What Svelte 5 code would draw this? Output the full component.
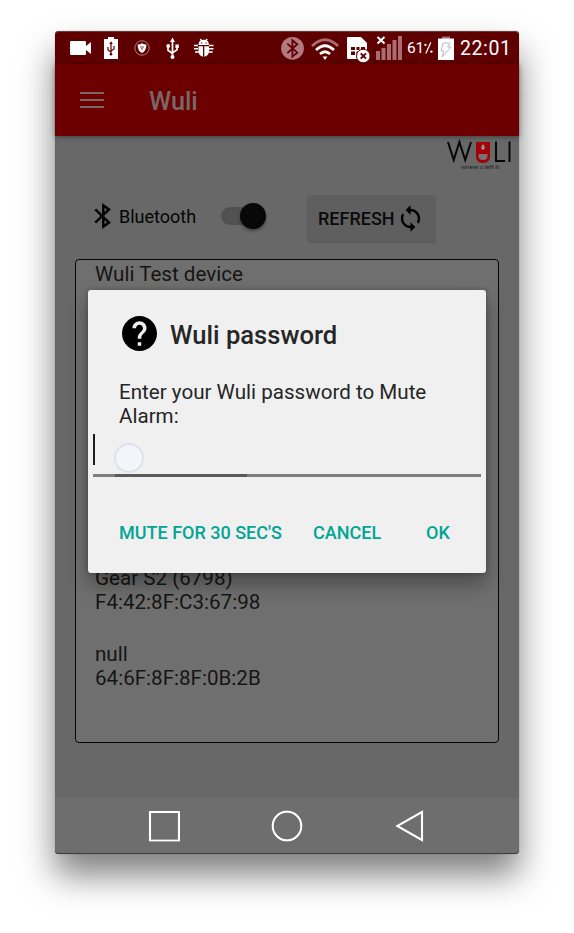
<script>
  const devices = [
    { name: 'Wuli Test device', address: '' },
    { name: '', address: '' },
    { name: '', address: '' },
    { name: '', address: '' },
    { name: 'Gear S2 (6798)', address: 'F4:42:8F:C3:67:98' },
    { name: 'null', address: '64:6F:8F:8F:0B:2B' }
  ];
</script>

<main class="stage">
  <div class="phone">
    <header class="status">
      <svg class="video" viewBox="70 31 21 33" width="21" height="33"><path d="M71 41h14q1 0 1 1v4l5-4v12l-5-4v4q0 1-1 1H71q-1 0-1-1V42q0-1 1-1z" fill="#fff"/></svg>
      <svg class="charge" viewBox="104 31 14 33" width="14" height="33">
        <path d="M104 39h4v-2h6v2h4v20h-14z" fill="#fff"/>
        <path d="M111 43v11M108 47v3l3 2M114 46v3l-3 2" fill="none" stroke="#5f0000" stroke-width="1.2"/><path d="M109.2 44l1.8-2.7 1.8 2.7z" fill="#5f0000"/><circle cx="111" cy="54.3" r="1.3" fill="#5f0000"/>
      </svg>
      <svg class="shield" viewBox="134 31 16 33" width="16" height="33">
        <circle cx="142" cy="48" r="7.2" fill="none" stroke="#b98a8a" stroke-width=".9"/>
        <path d="M137.600 44.400q2.600 0 4.400-1.200 1.800 1.200 4.400 1.200 0 6.400-4.400 8.600-4.400-2.200-4.400-8.600z" fill="#fff"/>
        <path d="M142 45.500v5M140.600 46.300v1.200l1.400 1.200M143.400 46.300v1.200l-1.400 1.200" stroke="#8a3030" stroke-width=".7" fill="none"/>
      </svg>
      <svg class="usb" viewBox="166 31 13 33" width="13" height="33">
        <path d="M172.500 41v15M168 47v3.200l4.500 3.300M177 46.500v3.200l-4.500 3.200" fill="none" stroke="#fff" stroke-width="1.700"/>
        <path d="M170 42l2.500-4.400 2.500 4.400zM175.400 44.600h3.400v3.400h-3.400z" fill="#fff"/><circle cx="168.200" cy="46" r="1.900" fill="#fff"/><circle cx="172.500" cy="57" r="2" fill="#fff"/>
      </svg>
      <svg class="bug" viewBox="193 31 22 33" width="22" height="33">
        <path d="M198.500 45q0-5.200 5.200-5.200T209 45zM198.500 46.300h4.500v10.400q-4.500-.8-4.500-6zM204.300 46.300h4.700v4.400q0 5.200-4.700 6z" fill="#fff"/>
        <path d="M200.200 39l2 2.400M207.200 39l-2 2.400M194 45.500h4M194 48.700h4M195 52h4M209 45.500h4.500M209 48.700h4.500M208.500 52h4.200" stroke="#fff" stroke-width="1.400"/>
        <path d="M201 43h1.300M205.500 43h1.300" stroke="#5f0000" stroke-width="1.200"/>
      </svg>

      <svg class="bt" viewBox="281 31 23 33" width="23" height="33">
        <circle cx="292.500" cy="48.300" r="11.400" fill="#b27a80"/>
        <path d="M287.300 43.600l10 9-4.900 4V40.200l4.900 4-10 9" fill="none" stroke="#5f0000" stroke-width="1.800"/>
      </svg>
      <svg class="wifi" viewBox="311 31 28 33" width="28" height="33" fill="none" stroke-width="2.700">
        <path d="M312 46q13-12.500 26 0" stroke="#a96c72"/>
        <path d="M316 50q9-8.500 18 0M320 54q5-4.500 10 0" stroke="#fff"/>
        <path d="M322.600 56.500h4.800l-2.400 3.500z" fill="#fff"/>
      </svg>
      <svg class="sim" viewBox="347 31 24 33" width="24" height="33">
        <path d="M347 38q0-1 1-1h13l6 6v16h-19q-1 0-1-1z" fill="#fff"/>
        <path d="M351 47h4v3h-4zM356.500 47h3v3h-3zM361 47h4v3h-4zM351 51.500h4v3.500h-4zM356.500 51.500h3v3.500h-3z" fill="#5f0000"/>
        <circle cx="363.300" cy="56" r="6.800" fill="#fff" stroke="#5f0000" stroke-width="1"/>
        <path d="M360.700 53.300l5.300 5.400M366 53.300l-5.300 5.400" stroke="#5f0000" stroke-width="1.900"/>
      </svg>
      <svg class="signal" viewBox="376 31 26 33" width="26" height="33">
        <path d="M376 51h4v9h-4zM381.500 48h4v12h-4zM387 44h4v16h-4zM392.500 40h4v20h-4zM398 36h4v24h-4z" fill="#a96c72"/>
        <path d="M377.500 37l7 6.500M384.500 37l-7 6.500" stroke="#fff" stroke-width="2"/>
      </svg>
      <span class="percent"><b>61</b><svg viewBox="0 0 10 14" width="9" height="14"><path d="M2 13L7.500 1" stroke="#fff" stroke-width="1.400"/><circle cx="1.600" cy="3.500" r="1.300" fill="#fff"/><circle cx="8.200" cy="11" r="1.300" fill="#fff"/></svg></span>
      <svg class="power" viewBox="438 31 16 33" width="16" height="33">
        <path d="M442 36.500h8V39h-8z" fill="#a96c72"/><path d="M438 38.500h16V60h-16z" fill="#fff"/>
        <path d="M443 43h7l-2.500 4h3.500l-9 10 2-6h-3z" fill="none" stroke="#bbb" stroke-width="1"/>
      </svg>
      <span class="clock">22:01</span>
    </header>

    <div class="appbar">
      <div class="menu"><i></i><i></i><i></i></div>
      <h1>Wuli</h1>
    </div>

    <section class="content">
      <svg class="logo" viewBox="446 139 68 32" width="68" height="32">
        <path d="M448 142l5.700 18 5.700-18 5.800 18 5.800-18M496 141.500V161h9M509.500 141.500V162" fill="none" stroke="#060606" stroke-width="2"/>
        <path d="M476 142h14v14.500q0 6.500-7 6.500t-7-6.500z" fill="#a30008"/>
        <path d="M478.500 154h9v2q0 4-4.500 4t-4.500-4z" fill="#747474"/>
        <path d="M482 145h2v2.500h1l-2 2.500-2-2.500h1z" fill="#999" stroke="#999" stroke-width=".5"/>
        <text x="461" y="168.600" font-size="6.500" textLength="38" fill="#252525" class="tagline">where u left it</text>
      </svg>
      <div class="controls">
        <svg class="btglyph" viewBox="94 203 17 26" width="17" height="26"><path d="M95.300 209.400l13.700 13.200-5.700 4V205.400l5.700 4-13.700 13.200" fill="none" stroke="#050505" stroke-width="2.500"/></svg>
        <span class="label">Bluetooth</span>
        <div class="toggle"><span></span></div>
        <button class="refresh">REFRESH
          <svg viewBox="0 0 24 24" width="29" height="29"><path d="M12 4V1L8 5l4 4V6c3.310 0 6 2.690 6 6 0 1.010-.25 1.970-.7 2.800l1.460 1.460C19.540 15.030 20 13.570 20 12c0-4.420-3.580-8-8-8zm0 14c-3.310 0-6-2.690-6-6 0-1.010.25-1.970.7-2.800L5.240 7.740C4.460 8.970 4 10.430 4 12c0 4.420 3.580 8 8 8v3l4-4-4-4v3z"/></svg>
        </button>
      </div>
      <ul class="devices">
        {#each devices as device}
          <li><div>{device.name}</div><div>{device.address}</div></li>
        {/each}
      </ul>
    </section>

    <nav>
      <svg viewBox="0 0 32 32" width="32" height="32"><path d="M2 2h29v28.500h-29z"/></svg>
      <svg viewBox="0 0 32 32" width="32" height="32"><circle cx="16" cy="16" r="14.300"/></svg>
      <svg viewBox="0 0 32 32" width="32" height="32"><path d="M28 2v28L3.300 16z"/></svg>
    </nav>

    <div class="dialog">
      <div class="title">
        <svg viewBox="2 2 20 20" width="35" height="35"><path d="M12 2C6.480 2 2 6.480 2 12s4.480 10 10 10 10-4.480 10-10S17.520 2 12 2zm1 17h-2v-2h2v2zm2.070-7.750l-.9.920C13.450 12.900 13 13.500 13 15h-2v-.5c0-1.100.45-2.100 1.170-2.830l1.240-1.260c.37-.36.590-.86.590-1.410 0-1.100-.9-2-2-2s-2 .9-2 2H8c0-2.210 1.790-4 4-4s4 1.790 4 4c0 .88-.36 1.680-.93 2.250z"/></svg>
        <h2>Wuli password</h2>
      </div>
      <p>Enter your Wuli password to Mute<br />Alarm:</p>
      <div class="field"><span class="caret"></span><span class="touch"></span></div>
      <div class="actions">
        <span class="mute">MUTE FOR 30 SEC'S</span>
        <span class="cancel">CANCEL</span>
        <span class="ok">OK</span>
      </div>
    </div>
  </div>
</main>

<style>
  :global(body) { margin: 0; background: #fff; }
  * { box-sizing: border-box; }
  svg { display: block; flex: none; }
  .stage { width: 574px; height: 933px; padding: 31px 0 0 55px; overflow: hidden; font-family: Roboto, sans-serif; }
  .phone {
    position: relative; width: 464px; height: 823px; display: flex; flex-direction: column;
    border-radius: 4px; background: #686868;
    box-shadow: 0 0 1px rgba(0, 0, 0, .55), 0 21px 34px rgba(0, 0, 0, .5);
  }
  .status { display: flex; height: 33px; background: #5f0000; border-top: 1px solid #654040; border-radius: 4px 4px 0 0; padding-left: 15px; }
  .status svg { margin-top: -1px; }
  .status .charge { margin-left: 13px; }
  .status .shield { margin-left: 16px; }
  .status .usb { margin-left: 16px; }
  .status .bug { margin-left: 14px; }
  .status .bt { margin-left: 66px; }
  .status .wifi { margin-left: 7px; }
  .status .sim { margin-left: 8px; }
  .status .signal { margin-left: 5px; }
  .percent { display: flex; width: 27px; margin-left: 5px; color: #fff; font: 15.500px/33px Roboto, sans-serif; letter-spacing: -.2px; }
  .status .percent b { font-weight: 400; width: 17px; }
  .status .percent svg { margin-top: 9px; }
  .status .power { margin-left: 4px; }
  .clock { margin-left: 6px; color: #fff; font: 19.500px/33px Roboto, sans-serif; letter-spacing: .6px; }
  .appbar { display: flex; align-items: center; height: 72px; padding-left: 25px; background: #6c0000; box-shadow: 0 1px 5px rgba(0, 0, 0, .4); }
  .menu { width: 24px; display: flex; flex-direction: column; gap: 5px; margin-top: 0; }
  .menu i { height: 2px; background: #7b6666; }
  h1 { margin: 3px 0 0 45px; font-size: 25.200px; line-height: 30px; font-weight: 500; color: #796767; }
  .content { height: 662px; padding: 3px 19px 0 20px; display: flex; flex-direction: column; }
  .logo { align-self: flex-end; margin-right: -14px; }
  .tagline { font-family: Lato, sans-serif; }
  .controls { display: flex; height: 48px; margin-top: 24px; align-items: flex-start; padding-left: 19px; }
  .btglyph { margin-top: 8px; }
  .label { width: 102px; margin: 9px 0 0 8px; font-size: 18px; line-height: 26px; color: #050505; }
  .toggle { width: 42px; height: 18px; margin-top: 12px; border-radius: 9px; background: #515151; }
  .toggle span { display: block; width: 26px; height: 26px; margin: -4px 0 0 18.500px; border-radius: 50%; background: #080808; box-shadow: 0 2px 3px rgba(0, 0, 0, .35); }
  .refresh { display: flex; align-items: center; width: 129px; height: 47px; padding: 0 0 0 11px; margin-left: 44px; border: 0; border-radius: 3px; background: #5f5f5f; color: #0b0b0b; font: 500 18px Roboto, sans-serif; box-shadow: 0 1px 1px rgba(0, 0, 0, .15); }
  .refresh svg { margin: -1px 0 0 1px; }
  .devices { list-style: none; margin: 16px 0 0; width: 424px; height: 484px; padding: 2px 0 0 19px; border: 1.500px solid #060606; border-radius: 4px; background: #6f6f6f; color: #151515; font-size: 20.600px; line-height: 24px; }
  .devices li { height: 76px; }
  .devices li div { height: 24px; }
  nav { height: 56px; display: flex; justify-content: space-between; padding: 12px 93px 0; background: #6e6e6e; border-bottom: 1px solid #3d3d3d; border-radius: 0 0 4px 4px; }
  nav svg { fill: none; stroke: #fff; stroke-width: 2.200; filter: drop-shadow(0 0 .6px rgba(0, 0, 0, .7)); }
  .dialog { position: absolute; left: 33px; top: 259px; width: 398px; height: 283px; padding-top: 26px; border-radius: 3px; background: #f0f0f0; box-shadow: 0 11px 20px rgba(0, 0, 0, .34), 0 0 5px rgba(0, 0, 0, .25); color: #262626; }
  .title { display: flex; align-items: center; height: 35px; padding-left: 34px; }
  .title svg { fill: #000; }
  h2 { margin: 4px 0 0 13px; font-size: 25.600px; line-height: 35px; font-weight: 500; }
  p { margin: 29px 0 0 31px; font-size: 20.600px; line-height: 24px; white-space: nowrap; }
  .field { display: flex; height: 49px; margin: 0 5px; border-bottom: 3px solid; border-image: linear-gradient(90deg, #7c7c7c 25px, #5a5a5a 25px 155px, #7c7c7c 155px) 3; }
  .caret { width: 2px; height: 31px; margin-top: 6px; background: #201c1a; }
  .touch { width: 30px; height: 30px; margin: 15px 0 0 19px; border: 2px solid #dfe0ee; border-radius: 50%; background: #f4f5f8; }
  .actions { display: flex; margin-top: 44px; padding-left: 31px; color: #00a594; font-size: 18px; line-height: 24px; font-weight: 500; white-space: nowrap; }
  .mute { width: 194px; }
  .cancel { width: 113px; }
</style>
